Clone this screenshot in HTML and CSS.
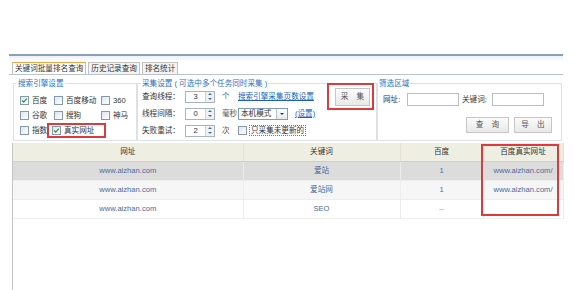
FILE: index.html
```html
<!DOCTYPE html>
<html lang="zh-CN">
<head>
  <meta charset="UTF-8">
  <title>关键词批量排名查询</title>
  <link rel="stylesheet" href="styles.css">
</head>
<body>
  <div class="app">
    <div class="topline"></div>
    <div class="tabs">
      <span class="tab active">关键词批量排名查询</span>
      <span class="tab">历史记录查询</span>
      <span class="tab">排名统计</span>
    </div>

    <div class="panel">
      <fieldset class="group engines">
        <legend>搜索引擎设置</legend>
        <div class="engine-grid">
          <label class="chk"><i class="box on"><svg viewBox="0 0 9 9"><polyline points="1.5,4.5 3.5,6.5 7.5,2"/></svg></i>百度</label>
          <label class="chk"><i class="box"></i>百度移动</label>
          <label class="chk"><i class="box"></i>360</label>
          <label class="chk"><i class="box"></i>谷歌</label>
          <label class="chk"><i class="box"></i>搜狗</label>
          <label class="chk"><i class="box"></i>神马</label>
          <label class="chk"><i class="box"></i>指数</label>
          <label class="chk marked"><i class="box on"><svg viewBox="0 0 9 9"><polyline points="1.5,4.5 3.5,6.5 7.5,2"/></svg></i>真实网址</label>
        </div>
      </fieldset>

      <fieldset class="group collect">
        <legend>采集设置 ( 可选中多个任务同时采集 )</legend>
        <div class="collect-grid">
          <span>查询线程：</span>
          <span class="spin"><span class="spin-val">3</span><span class="spin-btn"><i class="up"></i><i class="down"></i></span></span>
          <span class="unit">个</span>
          <span><a class="link" href="#">搜索引擎采集页数设置</a></span>

          <span>线程间隔：</span>
          <span class="spin"><span class="spin-val">0</span><span class="spin-btn"><i class="up"></i><i class="down"></i></span></span>
          <span class="unit">毫秒</span>
          <span class="inline">
            <span class="select"><span class="select-val">本机模式</span><span class="drop"><i></i></span></span>
            <a class="link" href="#">(设置)</a>
          </span>

          <span>失败重试：</span>
          <span class="spin"><span class="spin-val">2</span><span class="spin-btn"><i class="up"></i><i class="down"></i></span></span>
          <span class="unit">次</span>
          <span class="inline"><label class="chk"><i class="box"></i><span class="focus">只采集未更新的</span></label></span>
        </div>
        <div class="start-wrap"><button class="btn start">采 集</button></div>
      </fieldset>

      <fieldset class="group filter">
        <legend>筛选区域</legend>
        <div class="filter-row">
          <span class="f-label">网址:</span>
          <span class="field"></span>
          <span class="f-label kw">关键词:</span>
          <span class="field"></span>
        </div>
        <div class="filter-actions">
          <button class="btn query">查 询</button>
          <button class="btn export">导 出</button>
        </div>
      </fieldset>
    </div>

    <div class="grid-wrap">
      <table class="grid">
        <colgroup>
          <col style="width:230px">
          <col style="width:157px">
          <col style="width:83px">
          <col style="width:80px">
        </colgroup>
        <thead>
          <tr><th>网址</th><th>关键词</th><th>百度</th><th>百度真实网址</th></tr>
        </thead>
        <tbody>
          <tr class="sel"><td>www.aizhan.com</td><td>爱站</td><td>1</td><td>www.aizhan.com/</td></tr>
          <tr class="alt"><td>www.aizhan.com</td><td>爱站网</td><td>1</td><td>www.aizhan.com/</td></tr>
          <tr><td>www.aizhan.com</td><td>SEO</td><td class="none">--</td><td></td></tr>
        </tbody>
      </table>
      <div class="mark"></div>
    </div>
  </div>
</body>
</html>
```

FILE: styles.css
```css
body {
  margin: 0;
  background-color: #fff;
  font-family: "Liberation Sans", "Noto Sans CJK SC", sans-serif;
  font-size: 7.6px;
  line-height: 1.2;
  color: #333;
}

.app {
  display: flex;
  flex-direction: column;
  height: 290px;
  padding: 54px 11px 0 9px;
  box-sizing: border-box;
}

.topline {
  height: 6px;
  border-top: 2px solid #8d9fb6;
  background: linear-gradient(#eef1f5, #fff);
}

/* tabs */
.tabs {
  display: flex;
  gap: 2px;
  height: 12px;
  padding-left: 3px;
  border-bottom: 1px solid #b9c3cf;
}

.tab {
  padding: 0 2px;
  line-height: 11px;
  border: 1px solid #c2c2c2;
  border-bottom: none;
  background-color: #f3f3f3;
}

.tab.active {
  background-color: #fff;
  border-top-color: #f0a33c;
}

/* settings panel */
.panel {
  display: flex;
  height: 66px;
}

.group {
  margin: 4px 0 0 0;
  padding: 0;
  min-width: 0;
  height: 62px;
  box-sizing: border-box;
  border: 1px solid #dde1e6;
}

.group legend {
  padding: 0 1px;
  line-height: 9px;
  color: #2b72c6;
}

.engines {
  width: 124px;
  margin-left: 4px;
  padding: 5px 0 0 6px;
}

.engines legend {
  margin-left: -3px;
}

.engine-grid {
  display: grid;
  grid-template-columns: 34px 47px auto;
  grid-auto-rows: 15px;
  align-items: center;
}

.chk {
  display: flex;
  align-items: center;
  gap: 3px;
  white-space: nowrap;
}

.box {
  display: block;
  width: 9px;
  height: 9px;
  box-sizing: border-box;
  border: 1px solid #8599b0;
  background: linear-gradient(135deg, #dfe5ec, #fff);
}

.box svg {
  display: block;
  width: 7px;
  height: 7px;
}

.box svg polyline {
  fill: none;
  stroke: #2b9a35;
  stroke-width: 1.6;
}

.chk.marked {
  margin-left: -7px;
  padding: 1px 10px 1px 3px;
  border: 2px solid #e0393b;
  justify-self: start;
}

.collect {
  width: 240px;
  padding: 0 0 0 4px;
  display: flex;
}

.collect legend {
  margin-left: -1px;
}

.collect-grid {
  display: grid;
  grid-template-columns: 43px 30px 23px auto;
  grid-auto-rows: 17px;
  align-items: center;
  white-space: nowrap;
}

.unit {
  padding-left: 7px;
  color: #555;
}

.inline {
  display: flex;
  align-items: center;
  gap: 7px;
}

.link {
  color: #1b5fbf;
  text-decoration: underline;
}

.spin {
  display: flex;
  width: 30px;
  height: 12px;
  box-sizing: border-box;
  border: 1px solid #a7b4c4;
  background-color: #fff;
}

.spin-val {
  flex: 1;
  line-height: 10px;
  text-align: center;
}

.spin-btn {
  display: flex;
  flex-direction: column;
  width: 8px;
  border-left: 1px solid #cbd4df;
  background-color: #eef2f7;
}

.spin-btn i {
  flex: 1;
  display: flex;
  align-items: center;
  justify-content: center;
}

.spin-btn i::after {
  content: "";
  border-left: 2px solid transparent;
  border-right: 2px solid transparent;
}

.spin-btn .up::after {
  border-bottom: 2px solid #4d6d98;
}

.spin-btn .down::after {
  border-top: 2px solid #4d6d98;
}

.select {
  display: flex;
  width: 50px;
  height: 12px;
  box-sizing: border-box;
  border: 1px solid #7f9db9;
}

.select-val {
  flex: 1;
  padding-left: 2px;
  line-height: 10px;
}

.drop {
  display: flex;
  align-items: center;
  justify-content: center;
  width: 10px;
  border-left: 1px solid #b5c2d1;
  background: linear-gradient(#fdfdfd, #e4e9ef);
}

.drop i {
  border-left: 2px solid transparent;
  border-right: 2px solid transparent;
  border-top: 2px solid #333;
}

.focus {
  outline: 1px dotted #777;
  padding: 0 1px;
}

.start-wrap {
  margin: -5px 2px 0 auto;
  align-self: flex-start;
  padding: 3px 2px 2px 6px;
  border: 2px solid #e0393b;
}

.btn {
  display: block;
  height: 16px;
  padding: 0;
  font: inherit;
  letter-spacing: 3px;
  text-indent: 3px;
  color: #555;
  border: 1px solid #c6c6c6;
  background: linear-gradient(#fbfbfb, #e9e9e9);
}

.btn.start {
  width: 35px;
  height: 18px;
}

.filter {
  flex: 1;
  margin-right: 1px;
  padding: 0 0 0 5px;
}

.filter legend {
  margin-left: -5px;
}

.filter-row {
  display: flex;
  align-items: center;
  margin-top: 5px;
  height: 13px;
}

.f-label {
  width: 24px;
}

.f-label.kw {
  width: 30px;
  margin-left: 3px;
}

.field {
  width: 52px;
  height: 13px;
  box-sizing: border-box;
  border: 1px solid #b4bfcc;
  background-color: #fff;
}

.filter-actions {
  display: flex;
  justify-content: flex-end;
  gap: 5px;
  margin-top: 11px;
  padding-right: 9px;
}

.btn.query {
  width: 43px;
}

.btn.export {
  width: 38px;
}

/* result table */
.grid-wrap {
  position: relative;
  flex: 1;
  margin: 2px 0 0 3px;
  border-left: 1px solid #c4c4c4;
}

.grid {
  width: 550px;
  border-collapse: collapse;
  table-layout: fixed;
}

.grid th,
.grid td {
  height: 18px;
  padding: 0;
  text-align: center;
  white-space: nowrap;
}

.grid th {
  font-weight: normal;
  color: #333;
  background-color: #efeee2;
  border-right: 1px solid #e2e0d3;
  border-bottom: 1px solid #d3cfb8;
}

.grid td {
  color: #4c6a9b;
  border-right: 1px solid #ececec;
  border-bottom: 1px solid #eeeeee;
}

.grid tr.sel td {
  background-color: #dcdcdc;
}

.grid tr.alt td {
  background-color: #f6f6f6;
}

.grid td.none {
  color: #999;
}

.mark {
  position: absolute;
  left: 468px;
  top: 1px;
  width: 74px;
  height: 68px;
  border: 2px solid #e0393b;
}
```
